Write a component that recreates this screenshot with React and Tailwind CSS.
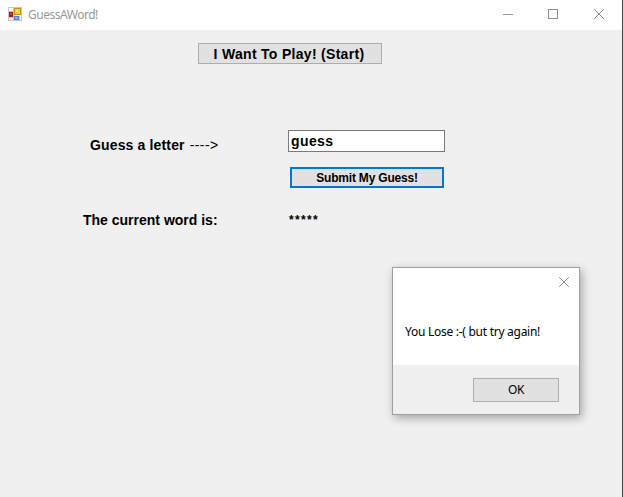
function AppIcon() {
  return (
    <svg width="14" height="14" viewBox="0 0 14 14" shapeRendering="crispEdges">
      <rect x="0.5" y="0.5" width="13" height="13" fill="#f6f6f6" stroke="#c3c5c9" />
      <rect x="1" y="5" width="4" height="5" fill="#a81a14" />
      <rect x="2" y="6" width="2" height="2" fill="#d8402c" />
      <rect x="6" y="1" width="7" height="7" fill="#c8920c" />
      <rect x="7" y="2" width="5" height="5" fill="#f8cb45" />
      <rect x="8" y="3" width="2" height="2" fill="#ffe694" />
      <rect x="6" y="9" width="5" height="4" fill="#4f80dc" />
      <rect x="7" y="10" width="3" height="2" fill="#86b0f7" />
      <path d="M5.5 1v12M1 4.5h4M1 10.5h4M11.5 9v4" stroke="#c3c6cc" />
    </svg>
  );
}

function CloseIcon() {
  return (
    <svg width="10" height="10" viewBox="0 0 10 10" fill="none" stroke="#8c8c8c">
      <path d="M0.2 0.2L9.8 9.8M9.8 0.2L0.2 9.8" />
    </svg>
  );
}

function TitleBar() {
  return (
    <header className="flex h-[30px] items-start bg-white pl-2">
      <div className="mt-[7px]">
        <AppIcon />
      </div>
      <span className="ml-1.5 mt-[7px] text-[12px] leading-4 tracking-[-0.48px] text-[#999999]">GuessAWord!</span>
      <div className="ml-auto mr-[18px] mt-[9px] flex">
        <svg className="mr-[35px]" width="10" height="10" stroke="#999999">
          <path d="M0 5.5h10" />
        </svg>
        <svg className="mr-[36px]" width="10" height="10" fill="none" stroke="#8c8c8c">
          <rect x="0.5" y="0.5" width="9" height="9" />
        </svg>
        <CloseIcon />
      </div>
    </header>
  );
}

function MessageBox() {
  return (
    <section className="absolute left-[392px] top-[267px] flex h-[148px] w-[188px] flex-col border border-[#a0a0a0] bg-white shadow-[2px_3px_9px_rgba(0,0,0,0.32)]">
      <div className="flex h-[97px] flex-col">
        <button className="mr-2.5 mt-[9px] self-end">
          <CloseIcon />
        </button>
        <p className="ml-3 mt-[37px] whitespace-nowrap text-[12px] leading-4 tracking-[-0.27px] text-black">
          You Lose :-( but try again!
        </p>
      </div>
      <div className="flex flex-1 justify-end bg-[#f0f0f0] pr-5 pt-[13px]">
        <button className="h-6 w-[86px] border border-[#adadad] bg-[#e1e1e1] text-[12px] leading-[22px] tracking-[-0.3px] text-black">
          OK
        </button>
      </div>
    </section>
  );
}

export default function App() {
  return (
    <div className="relative flex h-[497px] w-[623px] flex-col overflow-hidden border-r border-[#444444] bg-[#f0f0f0] font-['Noto_Sans',sans-serif]">
      <TitleBar />
      <main className="font-['Liberation_Sans',Arial,sans-serif] text-[14px] font-bold text-black">
        <button className="ml-[198px] mt-[13px] block h-[21px] w-[184px] whitespace-nowrap border border-[#adadad] bg-[#e1e1e1] pr-[2px] pt-px leading-[19px] tracking-[0.3px]">
          I Want To Play! (Start)
        </button>
        <div className="mt-[66px] flex h-[22px]">
          <label className="ml-[90px] w-[198px] whitespace-nowrap pt-[6px] leading-[18px] tracking-[0.15px]">
            Guess a letter <span className="ml-px font-normal tracking-[0.4px]">----&gt;</span>
          </label>
          <input
            className="h-[22px] w-[157px] border border-[#7a7a7a] bg-white pl-[2px] tracking-[0.4px] outline-none"
            defaultValue="guess"
          />
        </div>
        <button className="ml-[290px] mt-[15px] block h-[21px] w-[154px] whitespace-nowrap border-2 border-[#0078d7] bg-[#e1e1e1] pt-px text-[12px] leading-[17px] tracking-[-0.2px]">
          Submit My Guess!
        </button>
        <div className="mt-[23px] flex leading-[18px]">
          <span className="ml-[83px] w-[205px] whitespace-nowrap">The current word is:</span>
          <span className="ml-px text-[12px] tracking-[1.33px]">*****</span>
        </div>
      </main>
      <MessageBox />
    </div>
  );
}
